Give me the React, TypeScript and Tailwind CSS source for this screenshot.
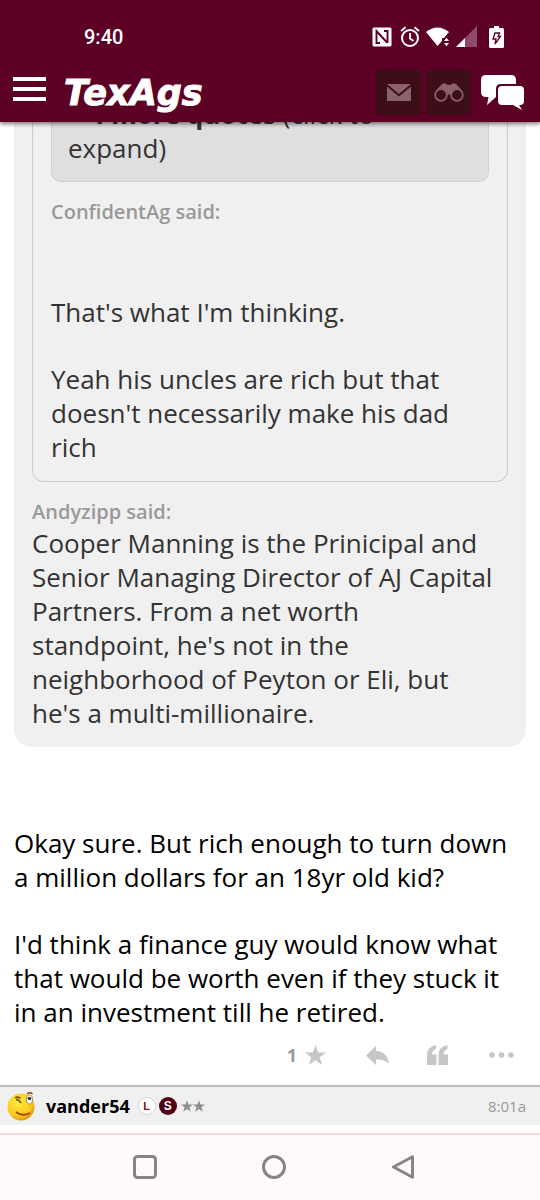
import type { ReactNode } from 'react';

function StatusBar() {
    return (
        <div className="flex items-center justify-between pt-6 pl-[84px] pr-9">
            <span className="pt-px font-[Roboto,sans-serif] text-[20px] leading-6 font-medium">9:40</span>
            {/* nfc, alarm, wifi, signal, battery */}
            <div className="flex items-center">
                <svg width="20" height="20" viewBox="0 0 20 20" className="mr-2">
                    <rect x="0.5" y="0.5" width="19" height="19" rx="1.5" fill="#fff" />
                    <path d="M8 16H4.500V4L15 15.500M12 4h3.500v12" fill="none" stroke="#5c0025" strokeWidth="1.900" />
                </svg>
                <svg width="20" height="22" viewBox="0 0 20 22" fill="none" stroke="#fff" strokeWidth="2" className="mr-[6px]">
                    <circle cx="10" cy="12" r="8" />
                    <path d="M10 7v5.500l3.500 2.500M1 5l4.500-3.800M19 5l-4.500-3.800" strokeWidth="1.800" />
                </svg>
                <svg width="24" height="22" viewBox="0 0 24 22" fill="#fff" className="mr-[6px]">
                    <path d="M0 6Q11.500-3 23 6L18 12h-2v3l-4.500 5z" />
                    <path d="M18 15l2.500-3.200L23 15zM18 17h5l-2.500 3.200z" />
                </svg>
                <svg width="21" height="21" viewBox="0 0 21 21" className="mr-3">
                    <path d="M0 21L21 0v21z" fill="#8e4a6a" />
                    <path d="M0 21L9 12v9z" fill="#fff" />
                </svg>
                <svg width="15" height="22" viewBox="0 0 15 22">
                    <path d="M5 0h5v2h3.500q1.500 0 1.500 1.500v17q0 1.500-1.500 1.500h-12Q0 22 0 20.500v-17Q0 2 1.500 2H5z" fill="#fff" />
                    <path d="M6 7h4.500L9 10.500h2.500L6 18l1-5H4z" fill="none" stroke="#5c0025" strokeWidth="1.300" />
                </svg>
            </div>
        </div>
    );
}

function Header() {
    return (
        <header className="sticky top-0 z-10 bg-[#5c0025] text-white shadow-[0_2px_4px_rgba(0,0,0,0.5)]">
            <StatusBar />
            <div className="flex items-center pt-[21px] pb-[7px] pl-[13px] pr-4">
                <button type="button" aria-label="Menu" className="mr-[18px] mb-2 flex w-[33px] flex-col gap-[6px]">
                    <span className="h-1 bg-white" />
                    <span className="h-1 bg-white" />
                    <span className="h-1 bg-white" />
                </button>
                <a href="#home" className="font-['DejaVu_Sans',sans-serif] text-[35px] leading-8 font-bold italic [-webkit-text-stroke:1px_white]">
                    TexAgs
                </a>
                <div className="ml-auto flex items-center">
                    <button type="button" aria-label="Messages" className="mr-[5px] flex size-[45px] items-center justify-center rounded-[3px] bg-[#3d0d18]">
                        <svg width="24" height="17" viewBox="0 0 24 17" fill="#8a626d">
                            <path d="M0 0h24L12 10z" />
                            <path d="M0 2.500L12 12.500 24 2.500V17H0z" />
                        </svg>
                    </button>
                    <button type="button" aria-label="Watched topics" className="mr-[10px] flex size-[45px] items-center justify-center rounded-[3px] bg-[#3d0d18]">
                        <svg width="30" height="19" viewBox="0 0 30 19" fill="none" stroke="#8a626d">
                            <circle cx="7" cy="12" r="5.800" strokeWidth="1.800" />
                            <circle cx="23" cy="12" r="5.800" strokeWidth="1.800" />
                            <path d="M2.500 7L8 1q3-2 5 .800h4Q19-1 22 1l5.500 6q-5-2.500-9 .500-1.500 1.500-2 4h-3q-.500-2.500-2-4-4-3-9-.500z" fill="#8a626d" stroke="none" />
                        </svg>
                    </button>
                    <button type="button" aria-label="Forums">
                        <svg width="43" height="35" viewBox="0 0 43 35" fill="#fff">
                            <path d="M5 0h25q5 0 5 5v4H20q-5 0-5 5v8l-9 8 1.500-8H5q-5 0-5-5V5q0-5 5-5z" />
                            <path d="M21 11h18q4 0 4 4v11q0 4-4 4h-1l3 5-9-5H21q-4 0-4-4V15q0-4 4-4z" />
                        </svg>
                    </button>
                </div>
            </div>
        </header>
    );
}

function QuoteAuthor({ children }: { children: ReactNode }) {
    return <p className="text-[20px] leading-7 font-semibold text-[#999]">{children}</p>;
}

function Quotes() {
    return (
        <blockquote className="rounded-b-[18px] bg-[#f0f0f0] px-[18px] pb-[17px] text-[#333]">
            <div className="rounded-b-xl border border-t-0 border-[#ccc] px-[18px] pb-[17px]">
                <button type="button" className="block w-full rounded-b-[10px] border border-t-0 border-[#d0d0d0] bg-[#dfdfdf] px-4 pb-4 text-left">
                    <strong>+ 4 more quotes</strong> (click to expand)
                </button>
                <div className="pt-4 pb-[69px]">
                    <QuoteAuthor>ConfidentAg said:</QuoteAuthor>
                </div>
                <p>That's what I'm thinking.</p>
                <p className="pt-[33px]">
                    Yeah his uncles are rich but that doesn't necessarily make his dad rich
                </p>
            </div>
            <div className="pt-4">
                <QuoteAuthor>Andyzipp said:</QuoteAuthor>
            </div>
            <p className="pr-2">
                Cooper Manning is the Prinicipal and Senior Managing Director of AJ Capital
                Partners. From a net worth standpoint, he's not in the neighborhood of Peyton
                or Eli, but he's a multi-millionaire.
            </p>
        </blockquote>
    );
}

function PostActions() {
    return (
        <div className="flex items-center justify-end pt-[14px] pr-[26px] pb-[18px] text-[#c6c6c6]">
            <button type="button" aria-label="Like" className="mr-10 flex items-center gap-2">
                <span className="text-[18px] leading-6 font-bold text-[#999]">1</span>
                <svg width="21" height="20" viewBox="0 0 21 20" fill="currentColor">
                    <path d="M10.500 0l2.700 7.400H21l-6.200 4.800L17 20l-6.500-4.700L4 20l2.200-7.800L0 7.400h7.800z" />
                </svg>
            </button>
            <button type="button" aria-label="Reply" className="mr-[38px]">
                <svg width="23" height="19" viewBox="0 0 23 19" fill="currentColor">
                    <path d="M0 9.500L10 0v5q11 .500 13 12.500-5-4.500-13-4V19z" />
                </svg>
            </button>
            <button type="button" aria-label="Quote" className="mr-[41px]">
                <svg width="21" height="20" viewBox="0 0 21 20" fill="currentColor">
                    <path d="M9 0v4Q5 5 5 9.500h4.500V20H0v-9Q0 1.500 9 0zM20.500 0v4q-4 1-4 5.500H21V20h-9.500v-9q0-9.500 9-11z" />
                </svg>
            </button>
            <button type="button" aria-label="More">
                <svg width="25" height="6" viewBox="0 0 25 6" fill="currentColor">
                    <circle cx="3" cy="3" r="2.800" />
                    <circle cx="12.500" cy="3" r="2.800" />
                    <circle cx="22" cy="3" r="2.800" />
                </svg>
            </button>
        </div>
    );
}

function Avatar() {
    return (
        <svg width="29" height="29" viewBox="0 0 29 29">
            <defs>
                <radialGradient id="face" cx="40%" cy="35%" r="70%">
                    <stop offset="0" stopColor="#ffec3d" />
                    <stop offset="0.700" stopColor="#fbc81d" />
                    <stop offset="1" stopColor="#d98d10" />
                </radialGradient>
            </defs>
            <circle cx="14" cy="15" r="13.500" fill="url(#face)" />
            <path d="M8 6q3-2 5.500 .500M9 7.500q3 0 5 3.500" fill="none" stroke="#6b4a10" strokeWidth="1.500" />
            <ellipse cx="22.500" cy="7.500" rx="3" ry="4.500" fill="#fff" stroke="#a8893a" />
            <circle cx="22.500" cy="6.500" r="1.800" fill="#333" />
            <path d="M20 2q3-2.500 5.500 0" fill="none" stroke="#6b4a10" strokeWidth="1.200" />
            <path d="M9 20q6 5 14 1" fill="none" stroke="#a5440d" strokeWidth="1.800" />
        </svg>
    );
}

function SmallStar() {
    return (
        <svg width="12" height="12" viewBox="0 0 21 20" fill="#8f8f8f">
            <path d="M10.500 0l2.700 7.400H21l-6.200 4.800L17 20l-6.500-4.700L4 20l2.200-7.800L0 7.400h7.800z" />
        </svg>
    );
}

function NextPostBar() {
    return (
        <div className="flex h-10 items-center border-t-2 border-[#bdbdbd] bg-[#f0f0f0] pr-[14px] pl-[7px]">
            <Avatar />
            <a href="#vander54" className="ml-[10px] text-[18px] leading-6 font-bold">vander54</a>
            <span className="ml-2 flex size-[18px] items-center justify-center rounded-full border border-[#d6d6d6] bg-white font-['Liberation_Sans',sans-serif] text-[11px] font-bold text-[#7a1020]">L</span>
            <span className="ml-[3px] flex size-[18px] items-center justify-center rounded-full bg-[#500014] font-['Liberation_Sans',sans-serif] text-[12px] font-bold text-white">S</span>
            <span className="ml-1 flex">
                <SmallStar />
                <SmallStar />
            </span>
            <time className="ml-auto text-[15px] leading-6 text-[#999]">8:01a</time>
        </div>
    );
}

function NavBar() {
    return (
        <nav className="grid grid-cols-3 justify-items-center border-t-2 border-[#f5dcdc] bg-[#fffaf9] pt-5 pr-[73px] pb-5 pl-[80px]">
            <button type="button" aria-label="Recent apps">
                <svg width="24" height="24" fill="none" stroke="#858585" strokeWidth="3">
                    <rect x="1.500" y="1.500" width="21" height="21" rx="3" />
                </svg>
            </button>
            <button type="button" aria-label="Home">
                <svg width="24" height="24" fill="none" stroke="#858585" strokeWidth="3">
                    <circle cx="12" cy="12" r="10.500" />
                </svg>
            </button>
            <button type="button" aria-label="Back">
                <svg width="24" height="24" fill="none" stroke="#858585" strokeWidth="3" strokeLinejoin="round">
                    <path d="M2.500 12L21.500 1.700v20.600z" />
                </svg>
            </button>
        </nav>
    );
}

export default function App() {
    return (
        <div className="min-h-screen bg-[#fffaf9] font-['Open_Sans',sans-serif] text-black">
            <Header />
            {/* scrolled so that the first quote line is half under the header */}
            <main className="-mt-[25px] bg-white pb-2">
                <article>
                    <div className="px-[14px] text-[26px] leading-[34px]">
                        <Quotes />
                        <p className="pt-[79px]">
                            Okay sure. But rich enough to turn down a million dollars for an 18yr old kid?
                        </p>
                        <p className="pt-[33px]">
                            I'd think a finance guy would know what that would be worth even if they
                            stuck it in an investment till he retired.
                        </p>
                    </div>
                    <PostActions />
                </article>
                <NextPostBar />
            </main>
            <NavBar />
        </div>
    );
}
